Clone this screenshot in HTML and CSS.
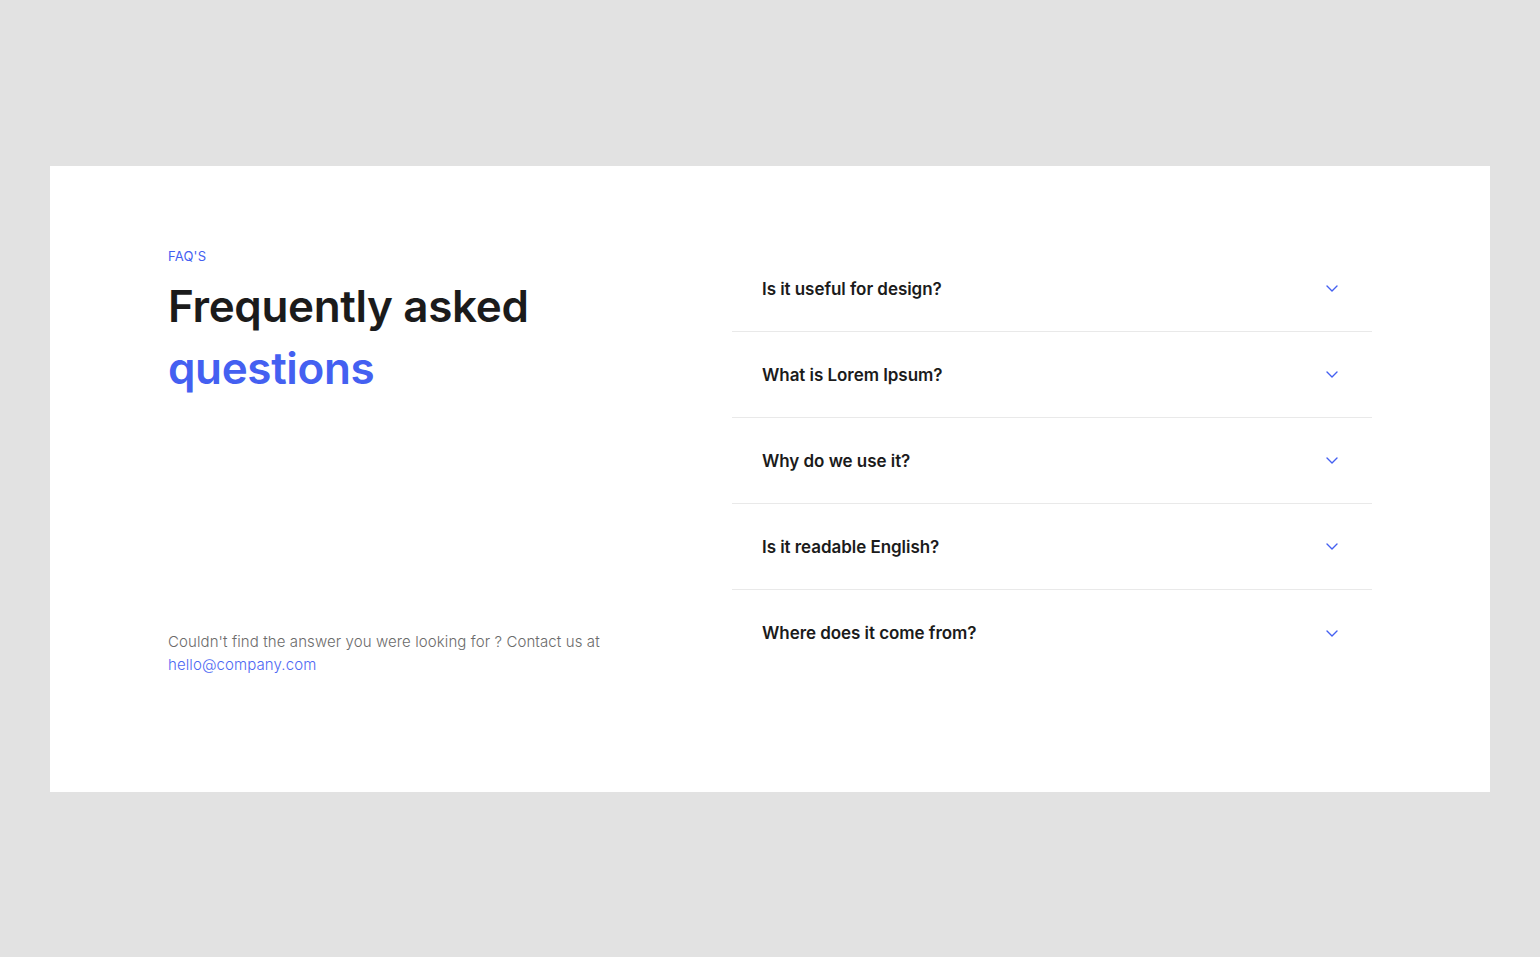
FILE: index.html
```html
<!DOCTYPE html>
<html lang="en">
<head>
<meta charset="utf-8">
<title>FAQ</title>
<link rel="stylesheet" href="styles.css">
</head>
<body>
<div class="page">
  <section class="card">
    <div class="intro">
      <div class="intro-top">
        <p class="eyebrow">FAQ'S</p>
        <h1 class="title">Frequently asked <span class="accent">questions</span></h1>
      </div>
      <p class="contact">Couldn't find the answer you were looking for ? Contact us at <a class="mail" href="#">hello@company.com</a></p>
    </div>
    <ul class="faq">
      <li class="item"><span class="q">Is it useful for design?</span><svg class="chev" viewBox="0 0 12 7" width="12" height="7"><path d="M1 1l5 5 5-5" fill="none" stroke="#4460f1" stroke-width="1.4" stroke-linecap="round" stroke-linejoin="round"/></svg></li>
      <li class="item"><span class="q">What is Lorem Ipsum?</span><svg class="chev" viewBox="0 0 12 7" width="12" height="7"><path d="M1 1l5 5 5-5" fill="none" stroke="#4460f1" stroke-width="1.4" stroke-linecap="round" stroke-linejoin="round"/></svg></li>
      <li class="item"><span class="q">Why do we use it?</span><svg class="chev" viewBox="0 0 12 7" width="12" height="7"><path d="M1 1l5 5 5-5" fill="none" stroke="#4460f1" stroke-width="1.4" stroke-linecap="round" stroke-linejoin="round"/></svg></li>
      <li class="item"><span class="q">Is it readable English?</span><svg class="chev" viewBox="0 0 12 7" width="12" height="7"><path d="M1 1l5 5 5-5" fill="none" stroke="#4460f1" stroke-width="1.4" stroke-linecap="round" stroke-linejoin="round"/></svg></li>
      <li class="item"><span class="q">Where does it come from?</span><svg class="chev" viewBox="0 0 12 7" width="12" height="7"><path d="M1 1l5 5 5-5" fill="none" stroke="#4460f1" stroke-width="1.4" stroke-linecap="round" stroke-linejoin="round"/></svg></li>
    </ul>
  </section>
</div>
</body>
</html>
```
FILE: styles.css
```css
* { box-sizing: border-box; }
html, body { margin: 0; padding: 0; }
body {
  background: #e2e2e2;
  font-family: Inter, "Noto Sans", sans-serif;
  -webkit-font-smoothing: antialiased;
}
.page {
  padding: 166px 50px 0 50px;
}
.card {
  background: #ffffff;
  width: 1440px;
  height: 626px;
  padding: 80px 118px 116px 118px;
  display: flex;
  justify-content: space-between;
}
.intro {
  width: 480px;
  display: flex;
  flex-direction: column;
  justify-content: space-between;
}
.eyebrow {
  margin: 0;
  font-size: 13px;
  line-height: 20px;
  color: #4460f1;
  letter-spacing: 0.2px;
}
.title {
  margin: 9px 0 0 0;
  font-size: 44px;
  line-height: 62px;
  font-weight: 600;
  color: #1b1b1b;
  letter-spacing: -0.35px;
  width: 420px;
}
.accent { color: #4460f1; }
.contact {
  margin: 0;
  font-size: 15px;
  line-height: 23px;
  color: #6b6b6b;
  font-weight: 300;
  letter-spacing: 0.1px;
  width: 440px;
}
.mail { color: #4e68f3; text-decoration: none; }
.faq {
  list-style: none;
  margin: 0;
  padding: 0;
  width: 640px;
}
.item {
  height: 86px;
  display: flex;
  align-items: center;
  justify-content: space-between;
  padding: 0 34px 0 30px;
  border-bottom: 1px solid #e9e9e9;
}
.item:last-child { border-bottom: none; }
.q {
  font-size: 17px;
  font-weight: 600;
  color: #1b1b1b;
  letter-spacing: -0.05px;
}
.chev { display: block; }
```
